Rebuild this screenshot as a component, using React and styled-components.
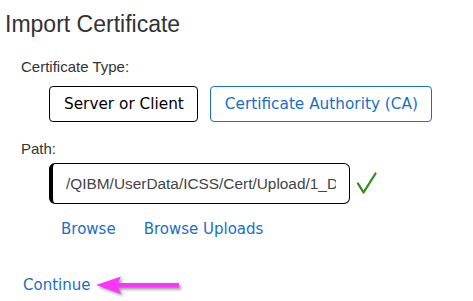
import React from 'react'
import styled, { createGlobalStyle } from 'styled-components'

const GlobalStyle = createGlobalStyle`
  html, body {
    margin: 0;
    padding: 0;
    background: #fff;
  }
`

function Check() {
    return (
        <CheckIcon width="20" height="22" viewBox="0 0 20 22">
            <path d="M1 11.5 L6.5 20.5 L18.5 1.5" fill="none" stroke="#2a8c12" strokeWidth="2.2" strokeLinejoin="round" strokeLinecap="round" />
        </CheckIcon>
    )
}

function Arrow() {
    return (
        <ArrowIcon width="92" height="24" viewBox="0 0 92 24">
            <polygon points="1,11 26,2.5 23,9 84,9 84,13.5 23,13.5 26,20" fill="#ff33ff" />
        </ArrowIcon>
    )
}

export default function App() {
    return (
        <Page>
            <GlobalStyle />
            <Title>Import Certificate</Title>
            <Label top={20}>Certificate Type:</Label>
            <ButtonRow>
                <TypeButton>Server or Client</TypeButton>
                <TypeButton secondary>Certificate Authority (CA)</TypeButton>
            </ButtonRow>
            <Label top={18}>Path:</Label>
            <PathRow>
                <PathInput readOnly value="/QIBM/UserData/ICSS/Cert/Upload/1_DCM_certificate.pem" />
                <Check />
            </PathRow>
            <LinkRow>
                <Link>Browse</Link>
                <Link>Browse Uploads</Link>
            </LinkRow>
            <ContinueRow>
                <Link>Continue</Link>
                <Arrow />
            </ContinueRow>
        </Page>
    )
}

const Page = styled.div`
    display: flex;
    flex-direction: column;
    align-items: flex-start;
    padding-top: 10px;
    font-family: "Liberation Sans", Arial, sans-serif;
    color: #333;
`;

const Title = styled.h1`
    margin: 0 0 0 5px;
    font-size: 23px;
    line-height: 28px;
    font-weight: normal;
    color: #333;
`;

const Label = styled.div`
    margin: ${p => p.top}px 0 0 21px;
    font-size: 15px;
    line-height: 18px;
    color: #333;
`;

const ButtonRow = styled.div`
    display: flex;
    gap: 12px;
    margin: 10px 0 0 49px;
`;

const TypeButton = styled.button`
    display: flex;
    align-items: center;
    height: 36px;
    padding: 0 13px 0 14px;
    border: 1px solid ${p => p.secondary ? '#1a6fc4' : '#000'};
    border-radius: 4px;
    background: #fff;
    color: ${p => p.secondary ? '#1a6fc4' : '#000'};
    font-family: "DejaVu Sans", Verdana, sans-serif;
    font-size: 15.3px;
    cursor: pointer;
`;

const PathRow = styled.div`
    display: flex;
    align-items: center;
    gap: 7px;
    margin: 5px 0 0 49px;
`;

const PathInput = styled.input`
    box-sizing: border-box;
    width: 301px;
    height: 41px;
    padding: 0 13px 0 13px;
    border: 1px solid #000;
    border-left: 4px solid #000;
    border-radius: 6px;
    font-family: "Liberation Sans", Arial, sans-serif;
    font-size: 15.4px;
    color: #444;
    outline: none;
`;

const CheckIcon = styled.svg`
    display: block;
    margin-top: -1px;
`;

const LinkRow = styled.div`
    display: flex;
    gap: 28px;
    margin: 16px 0 0 61px;
`;

const Link = styled.a`
    font-family: "DejaVu Sans", Verdana, sans-serif;
    font-size: 15px;
    line-height: 18px;
    color: #1a6fc4;
    cursor: pointer;
`;

const ContinueRow = styled.div`
    display: flex;
    align-items: center;
    gap: 5px;
    margin: 34px 0 0 23px;
`;

const ArrowIcon = styled.svg`
    display: block;
    margin-top: 2px;
    filter: drop-shadow(2px 2px 1.5px rgba(0, 0, 0, 0.4));
`;
